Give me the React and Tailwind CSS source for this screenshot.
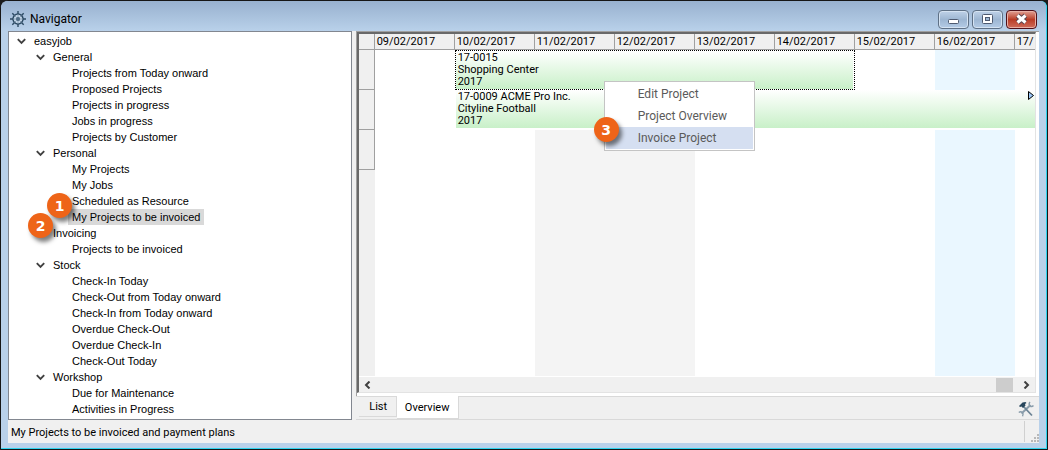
import { useState } from "react";
import clsx from "clsx";

const tree = [
  {
    label: "General",
    items: [
      "Projects from Today onward",
      "Proposed Projects",
      "Projects in progress",
      "Jobs in progress",
      "Projects by Customer",
    ],
  },
  {
    label: "Personal",
    items: [
      "My Projects",
      "My Jobs",
      "Scheduled as Resource",
      "My Projects to be invoiced",
    ],
  },
  { label: "Invoicing", items: ["Projects to be invoiced"] },
  {
    label: "Stock",
    items: [
      "Check-In Today",
      "Check-Out from Today onward",
      "Check-In from Today onward",
      "Overdue Check-Out",
      "Overdue Check-In",
      "Check-Out Today",
    ],
  },
  { label: "Workshop", items: ["Due for Maintenance", "Activities in Progress"] },
];

const days = [
  { date: "09/02/2017", col: "col-start-2" },
  { date: "10/02/2017", col: "col-start-3" },
  { date: "11/02/2017", col: "col-start-4", fill: "bg-[#f4f4f4]" },
  { date: "12/02/2017", col: "col-start-5", fill: "bg-[#f4f4f4]" },
  { date: "13/02/2017", col: "col-start-6" },
  { date: "14/02/2017", col: "col-start-7" },
  { date: "15/02/2017", col: "col-start-8" },
  { date: "16/02/2017", col: "col-start-9", fill: "bg-[#eaf7ff]" },
  { date: "17/", col: "col-start-10" },
];

const App = () => {
  const [selected, setSelected] = useState("My Projects to be invoiced");

  return (
    <div className="h-screen bg-[#1c1c1c] font-['Roboto',sans-serif] text-[11px] leading-4 text-black">
      <div className="flex h-full flex-col rounded-t-lg border border-[#161616] bg-[#b9d1ea]">
        <div className="flex min-h-0 flex-1 flex-col rounded-t-md border-r border-b border-[#2fd3ee] bg-gradient-to-b from-[#98b1cf] to-[#b9d1ea] to-[30px] px-[7px] pb-[5px]">
          <TitleBar />
          <div className="flex min-h-0 flex-1 flex-col bg-[#f0f0f0]">
            <main className="flex min-h-0 flex-1">
              <Tree selected={selected} onSelect={setSelected} />
              <Planner />
            </main>
            <StatusBar text={`${selected} and payment plans`} />
          </div>
        </div>
      </div>
    </div>
  );
};

const TitleBar = () => (
  <header className="flex h-[30px] shrink-0 items-start justify-between">
    <div className="flex items-center gap-1 pt-2 pl-0.5">
      <WheelIcon />
      <h1 className="text-xs leading-5">Navigator</h1>
    </div>
    <div className="flex gap-[3px] pt-[9px] pr-[2px]">
      <WindowButton label="Minimize">
        <rect x="10.5" y="9.5" width="10" height="4" rx="1" fill="#fff" stroke="#4e5a70" />
      </WindowButton>
      <WindowButton label="Maximize">
        <rect x="10.5" y="4.5" width="10" height="9" rx="1" fill="#fff" stroke="#4e5a70" />
        <rect x="13.5" y="7.5" width="4" height="3" fill="#9db6d2" stroke="#4e5a70" />
      </WindowButton>
      <WindowButton label="Close" danger>
        <path d="M11.500 5.500l8 7M19.500 5.500l-8 7" stroke="#5b4650" strokeWidth="5" />
        <path d="M11.500 5.500l8 7M19.500 5.500l-8 7" stroke="#fff" strokeWidth="3" />
      </WindowButton>
    </div>
  </header>
);

const WindowButton = ({ label, danger, children }) => (
  <button
    aria-label={label}
    className={clsx(
      "h-[19px] w-[31px] rounded-sm border inset-ring",
      danger
        ? "border-[#4f0f18] bg-gradient-to-b from-[#e0a094] via-[#b93b25] via-50% to-[#cf6c5a] inset-ring-[#e8b0a6]"
        : "border-[#5e7085] bg-gradient-to-b from-[#bfd2e8] via-[#9db6d2] via-50% to-[#b4cbe6] inset-ring-[#d5e3f2]",
    )}
  >
    <svg viewBox="1 1 29 17" className="h-full w-full" fill="none">
      {children}
    </svg>
  </button>
);

const Tree = ({ selected, onSelect }) => (
  <nav className="w-1/3 overflow-hidden border border-[#828790] bg-white pt-px font-['Liberation_Sans',sans-serif]">
    <TreeNode label="easyjob" className="pl-2" />
    <ul>
      {tree.map((group) => (
        <li key={group.label}>
          <TreeNode
            label={group.label}
            className="pl-[27px]"
            hideArrow={group.label === "Invoicing"}
          />
          <ul>
            {group.items.map((item) => (
              <li key={item} className="flex h-4 pl-[59px]">
                <button
                  onClick={() => onSelect(item)}
                  className={clsx(
                    "relative px-1 whitespace-nowrap",
                    item === selected && "bg-[#d9d9d9]",
                  )}
                >
                  {item}
                  {item === "Scheduled as Resource" && (
                    <Badge className="top-0 left-[-21px]">1</Badge>
                  )}
                  {item === "My Projects to be invoiced" && (
                    <Badge className="top-1 left-[-40px]">2</Badge>
                  )}
                </button>
              </li>
            ))}
          </ul>
        </li>
      ))}
    </ul>
  </nav>
);

const TreeNode = ({ label, className, hideArrow }) => (
  <button className={clsx("flex h-4 items-center gap-2", className)}>
    <svg
      viewBox="0 0 9 7"
      className={clsx("h-[7px] w-[9px]", hideArrow && "invisible")}
      fill="none"
    >
      <path d="M.8 1.2l3.7 3.7 3.7-3.7" stroke="#404040" strokeWidth="1.9" />
    </svg>
    {label}
  </button>
);

/* Numbered callout */
const Badge = ({ children, className }) => (
  <span
    className={clsx(
      "absolute z-20 flex size-[25px] items-center justify-center rounded-full bg-[#ee6418] font-['DejaVu_Sans',sans-serif] text-sm font-bold text-white shadow-[3px_4px_4px_rgba(0,0,0,0.5)]",
      className,
    )}
  >
    {children}
  </span>
);

const Planner = () => (
  <section className="ml-1 flex min-w-0 flex-1 flex-col">
    <div className="flex min-h-0 flex-1 flex-col border-t border-l border-[#a0a0a0] bg-white pr-[3px] pb-[3px]">
      <div className="flex min-h-0 flex-1 flex-col border-t-2 border-r border-b border-l-2 border-t-[#696969] border-r-[#e3e3e3] border-b-[#e3e3e3] border-l-[#696969]">
        <Timeline />
        <ScrollBar />
      </div>
    </div>
    <Tabs />
  </section>
);

const Timeline = () => (
  <div className="relative grid min-h-0 flex-1 grid-cols-[16px_repeat(8,80px)_1fr] grid-rows-[16px_40px_40px_40px_1fr] overflow-hidden">
    <div className="col-start-1 row-start-1 border-r border-b border-[#a0a0a0] bg-[#f0f0f0]" />
    {days.map((day) => (
      <div
        key={day.date}
        className={clsx(
          "row-start-1 border-b border-[#a0a0a0] bg-[#f0f0f0] pl-0.5",
          day.date !== "17/" && "border-r",
          day.col,
        )}
      >
        {day.date}
      </div>
    ))}
    <div className="col-start-1 row-start-2 border-r border-b border-[#a0a0a0] bg-[#f0f0f0]" />
    <div className="col-start-1 row-start-3 border-r border-b border-[#a0a0a0] bg-[#f0f0f0]" />
    <div className="col-start-1 row-start-4 border-r border-b border-[#a0a0a0] bg-[#f0f0f0]" />
    <div className="col-start-1 row-start-5 bg-[#f0f0f0]" />
    {days
      .filter((day) => day.fill)
      .map((day) => (
        <div
          key={day.date}
          className={clsx("row-start-2 row-end-6", day.col, day.fill)}
        />
      ))}

    <div className="col-start-3 col-end-8 row-start-2 border border-dotted border-black bg-white pr-px">
      <Project lines={["17-0015", "Shopping Center", "2017"]} />
    </div>
    <div className="relative col-start-3 col-end-11 row-start-3 bg-white pb-px pl-px">
      <Project lines={["17-0009 ACME Pro Inc.", "Cityline Football", "2017"]} />
    </div>
    <svg
      viewBox="0 0 6 9"
      className="absolute top-[57px] right-px h-[9px] w-[6px]"
    >
      <path d="M.5.5v8l5-4z" fill="#9cc8f8" stroke="#000" />
    </svg>
    <ContextMenu />
  </div>
);

const Project = ({ lines }) => (
  <div className="h-[38px] bg-gradient-to-b from-white to-[#c8f0c8] pt-px pl-0.5 leading-3">
    {lines.map((line) => (
      <p key={line}>{line}</p>
    ))}
  </div>
);

const ContextMenu = () => (
  <div className="absolute top-[47px] left-[245px] z-10 w-[151px] border border-[#c4c4c4] bg-white p-px text-xs text-[#5a5a5a]">
    {["Edit Project", "Project Overview", "Invoice Project"].map((item) => (
      <button
        key={item}
        className="block h-[22px] w-full pl-8 text-left last-of-type:bg-[#d5dff1]"
      >
        {item}
      </button>
    ))}
    <Badge className="top-[35px] left-[-11px]">3</Badge>
  </div>
);

const ScrollBar = () => (
  <div className="flex h-4 shrink-0 items-center justify-between border-t border-white bg-[#f0f0f0]">
    <button aria-label="Scroll left" className="pl-[5px]">
      <svg viewBox="0 0 7 8" className="h-2 w-[7px]" fill="none">
        <path d="M5.5.5L2 4l3.500 3.500" stroke="#404040" strokeWidth="2" />
      </svg>
    </button>
    <div className="flex h-full items-center">
      <div className="mr-[10px] h-[14px] w-[17px] bg-[#cdcdcd]" />
      <button aria-label="Scroll right" className="pr-[5px]">
        <svg viewBox="0 0 7 8" className="h-2 w-[7px]" fill="none">
          <path d="M1.500.5L5 4 1.500 7.500" stroke="#404040" strokeWidth="2" />
        </svg>
      </button>
    </div>
  </div>
);

const Tabs = () => (
  <div className="flex h-6 shrink-0 items-start border-t border-b border-[#d9d9d9] pl-[3px]">
    <button className="h-5 w-[38px] border-r border-b border-[#d9d9d9] pl-0.5 text-center">
      List
    </button>
    <button className="-mt-px h-[23px] w-[62px] border-r border-b border-[#d9d9d9] bg-white pt-0.5 text-center">
      Overview
    </button>
    <button aria-label="Settings" className="mt-1 mr-[5px] ml-auto">
      <ToolsIcon />
    </button>
  </div>
);

const StatusBar = ({ text }) => (
  <footer className="flex h-[23px] shrink-0 items-stretch justify-between pl-[3px]">
    <p className="pt-[5px]">{text}</p>
    <div className="my-px flex w-[15px] items-end justify-end border-l border-[#d0d0d0]">
      <svg viewBox="0 0 8 8" className="size-2" fill="#b8b8b8">
        <path d="M6 0h2v2h-2zM3 3h2v2h-2zM6 3h2v2h-2zM0 6h2v2h-2zM3 6h2v2h-2zM6 6h2v2h-2z" />
      </svg>
    </div>
  </footer>
);

const WheelIcon = () => (
  <svg viewBox="0 0 16 16" className="size-4" fill="none" stroke="#2c4a63">
    <circle cx="8" cy="8" r="5" fill="#c3d6e8" strokeWidth="1.500" />
    <path
      d="M8 3v10M3 8h10M4.500 4.500l7 7M11.500 4.500l-7 7"
      stroke="#7d97af"
      strokeWidth=".8"
    />
    <path
      d="M8 0v3M8 13v3M0 8h3M13 8h3M2.300 2.300l2 2M11.700 11.700l2 2M13.700 2.300l-2 2M4.300 11.700l-2 2"
      strokeWidth="1.400"
    />
    <circle cx="8" cy="8" r="1.500" fill="#4f6c85" stroke="#4f6c85" />
  </svg>
);

const ToolsIcon = () => (
  <svg viewBox="0 0 16 16" className="size-4" fill="none">
    <path d="M3.500 12.500L12.500 4" stroke="#8a9dab" strokeWidth="2" />
    <path d="M12 1a2.800 2.800 0 0 0 0 4 2.800 2.800 0 0 0 3.500-.5" stroke="#8a9dab" strokeWidth="1.500" />
    <path d="M.8 11.500a2.800 2.800 0 0 1 3.700.2 2.800 2.800 0 0 1 0 3.500" stroke="#8a9dab" strokeWidth="1.500" />
    <path d="M5.500 5.500l8.500 9" stroke="#6d8495" strokeWidth="1.800" />
    <path d="M1 5l3.500-3.500 3-.5 1 1-1.500 1 .5 1.500L5 7 3.500 5.500 2 6z" fill="#27465c" />
  </svg>
);

export default App;
